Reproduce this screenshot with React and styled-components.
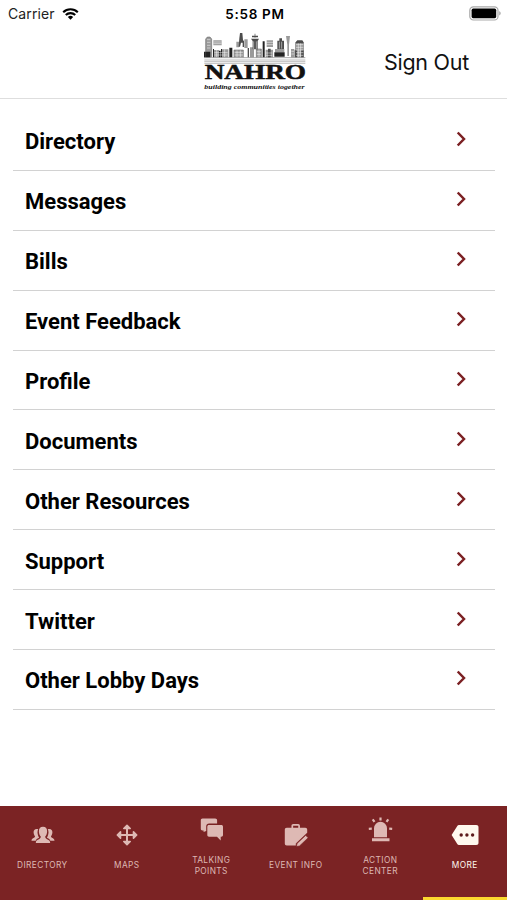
import styled, { createGlobalStyle } from 'styled-components';

const GlobalStyle = createGlobalStyle`
  * {
    box-sizing: border-box;
  }
  body {
    margin: 0;
    background: #fff;
  }
`;

const menu = [
  'Directory',
  'Messages',
  'Bills',
  'Event Feedback',
  'Profile',
  'Documents',
  'Other Resources',
  'Support',
  'Twitter',
  'Other Lobby Days',
];

const WifiIcon = () => (
  <svg width="17" height="12" viewBox="0 0 18 13">
    <g fill="none" stroke="#000" strokeWidth="2.300">
      <path d="M1.100 4.600a11.200 11.200 0 0 1 15.800 0" />
      <path d="M3.900 7.700a7.200 7.200 0 0 1 10.200 0" />
    </g>
    <path d="M9 12.700 6.100 9.800a4.100 4.100 0 0 1 5.800 0z" />
  </svg>
);

const BatteryIcon = () => (
  <svg width="33" height="15" viewBox="0 0 33 15">
    <rect x=".8" y=".8" width="28.200" height="13.200" rx="3.600" fill="#fff" stroke="#a9a9a9" strokeWidth="1.200" />
    <rect x="2.600" y="2.600" width="24.600" height="9.600" rx="1.600" />
    <path d="M30.200 5.300c2 .7 2 3.500 0 4.200z" fill="#a9a9a9" />
  </svg>
);

const Logo = () => (
  <svg width="104" height="62" viewBox="24 93 312 186">
    <g fill="#9a9a9a">
      <path d="M32 172v-55l5-6h8l5 6v55z" />
      <path d="M55 121h25v15H55zM56 150h16v22H56zM80 148h20v24H80z" />
      <path d="M117 150h28v22h-28zM124 125h8v17h-8zM148 118h10v26h-10z" />
      <path d="M165 142h12v30h-12zM184 147h15v25h-15z" />
      <path d="M215 121h19v20h-19zM212 149h22v23h-22zM240 147h28v10h-28z" />
      <path d="M273 108h12l-3 26v34h-5v-34zM288 147h10v25h-10zM300 126h27v46h-27z" />
    </g>
    <g fill="#222">
      <path d="M27 155h19v17H27zM54 147h3v25h-3zM78 147h3v25h-3zM103 143h9v29h-9z" />
      <path d="M72 152h5v20h-5zM203 124h6v48h-6zM238 157h31v13h-31z" />
    </g>
    <g fill="#4c4c4c">
      <path d="m131 140 2-25 2-16h7l2 21 3 4v17h-4v-13h-5l-3 12z" />
      <path d="M168 116h24l-4 7v25h-15v-25zM171 107h18v5h-18zM179 101h2v12h-2z" />
      <path d="M247 122h20v25h-20zM253 115h8v7h-8zM303 125l4-4h15l3 4v5h-22zM299 151h7v21h-7zM318 151h8v21h-8zM158 144h4v28h-4zM219 146h8v26h-8z" />
    </g>
    <g stroke="#fff" strokeWidth="1.500">
      <path d="M36 119h10M36 127h10M36 136h10M36 144h10M55 126h25M55 131h25M58 158h40M58 165h40M118 157h26M118 165h26" />
      <path d="M185 155h13M185 163h13M214 127h20M214 134h20M212 159h20M212 166h20M289 154h8M289 162h8M303 134h22M303 142h22M303 150h22M303 158h22M303 166h22" />
      <path d="M65 150v22M89 148v24M126 150v22M136 150v22M192 147v25M176 124v24M184 124v24M253 125v21M260 125v21M310 130v42M317 130v42" />
    </g>
    <g stroke="#555" strokeWidth="1.500" fill="none">
      <path d="M32 171v-54l5-6h8l5 6v54M117 172v-22h28v22M184 172v-25h15v25M27 173h304" />
    </g>
    <path d="M28 180h303M28 185h303M28 190h303" stroke="#a5a5a5" strokeWidth="2.200" />
    <text
      x="29"
      y="238"
      textLength="304"
      lengthAdjust="spacingAndGlyphs"
      fontFamily="'Liberation Serif', serif"
      fontWeight="700"
      fontSize="60"
      stroke="#111"
      strokeWidth="1.500"
      fill="#111"
    >
      NAHRO
    </text>
    <text
      x="28"
      y="266"
      textLength="301"
      lengthAdjust="spacingAndGlyphs"
      fontFamily="'Liberation Serif', serif"
      fontWeight="700"
      fontStyle="italic"
      fontSize="21"
      fill="#111"
    >
      building communities together
    </text>
  </svg>
);

const ChevronIcon = () => (
  <svg width="12" height="18" viewBox="0 0 12 18">
    <path d="m1.700 2.500 6.300 6.500-6.300 6.500" fill="none" stroke="#7b2023" strokeWidth="2.500" />
  </svg>
);

const PeopleIcon = () => (
  <svg width="24" height="18" viewBox="0 0 24 18" fill="currentColor">
    <path d="M7.200 3.200C4.300 2.400 2.500 3.800 2.600 6.400c.1 2 .9 3 1.400 3.800.4 1.900-3.500 1.300-3.500 4.500h4.200c.6-1.600 2-2.300 3.400-2.900C7.200 10.300 6.600 8.300 6.500 6.500c0-1.300.2-2.400.7-3.300z" />
    <path d="M16.800 3.200c2.900-.8 4.700.6 4.600 3.200-.1 2-.9 3-1.400 3.800-.4 1.900 3.500 1.300 3.500 4.500h-4.200c-.6-1.600-2-2.300-3.400-2.900.9-1.500 1.500-3.500 1.600-5.300 0-1.300-.2-2.400-.7-3.300z" />
    <path d="M12 .8c-2.800 0-4.300 1.900-4.100 4.900.1 2.300 1 3.800 1.900 4.900.3 3.500-5 2.100-5 6.400h14.400c0-4.300-5.300-2.900-5-6.400.9-1.100 1.800-2.600 1.900-4.900.2-3-1.300-4.900-4.100-4.900z" />
  </svg>
);

const MoveIcon = () => (
  <svg width="22" height="22" viewBox="0 0 22 22" fill="none" stroke="currentColor">
    <path d="M11 3v16M3 11h16" strokeWidth="2" />
    <path d="m7.800 4.500 3.200-3.200 3.200 3.200zM7.800 17.500l3.200 3.200 3.200-3.200zM4.500 7.800 1.300 11l3.200 3.200zM17.500 7.800l3.200 3.200-3.200 3.200z" fill="currentColor" strokeWidth="1.600" strokeLinejoin="round" />
  </svg>
);

const ChatIcon = () => (
  <svg width="24" height="23" viewBox="0 0 24 23" fill="currentColor">
    <path d="M2.500.5h12.700c1.100 0 1.900.8 1.900 1.800v3.300H9.200c-1.900 0-3 1.100-3 3V13l-2.600 1V12.400H2.500C1.400 12.400.8 11.800.8 10.700V2.300C.8 1.200 1.400.5 2.500.5z" />
    <path d="M9 7h12.300c1 0 1.700.7 1.700 1.700v8.400c0 1-.7 1.700-1.700 1.700h-.6v3.700L17 18.800H9c-1 0-1.700-.7-1.700-1.700V8.700C7.300 7.700 8 7 9 7z" />
  </svg>
);

const BriefcaseIcon = () => (
  <svg width="25" height="24" viewBox="0 0 25 24" fill="currentColor">
    <path d="M8.300 5V2.700c0-.6.300-.9.900-.9h5c.6 0 .9.300.9.900V5" fill="none" stroke="currentColor" strokeWidth="1.700" />
    <path d="M2.800 4.800h18.400c1.300 0 2 .7 2 2v3L11.800 20.500v2H2.800c-1.300 0-2-.7-2-2V6.800c0-1.300.7-2 2-2z" />
    <path d="m13 20.500 8.700-8.200 2.500 2.500-8.700 8.200-3.100.6z" stroke="#7b2324" strokeWidth=".7" />
  </svg>
);

const SirenIcon = () => (
  <svg width="25" height="25" viewBox="0 0 25 25" fill="currentColor">
    <path d="M6 20.300v-9a6.500 6.500 0 0 1 13 0v9zM4 21.300h17.500v3H4z" />
    <g stroke="currentColor" strokeWidth="2.200">
      <path d="M12.500.5v3M4.700 2.400l1.800 2.500M20.300 2.400l-1.800 2.500M.8 11.800l3-.2M24.200 11.800l-3-.2" />
    </g>
  </svg>
);

const MoreIcon = () => (
  <svg width="28" height="22" viewBox="0 0 28 22">
    <path d="M8.300 1h16.900c1.500 0 2.300.8 2.300 2.200v15.600c0 1.400-.8 2.200-2.300 2.200H8.300c-.9 0-1.500-.3-2-1.100L.6 11l5.700-8.900c.5-.8 1.100-1.100 2-1.100z" fill="currentColor" />
    <g fill="#5d1a1b">
      <circle cx="10.200" cy="11" r="1.700" />
      <circle cx="15.900" cy="11" r="1.700" />
      <circle cx="21.600" cy="11" r="1.700" />
    </g>
  </svg>
);

const tabs = [
  { label: 'DIRECTORY', icon: <PeopleIcon /> },
  { label: 'MAPS', icon: <MoveIcon /> },
  { label: 'TALKING POINTS', icon: <ChatIcon />, tall: true },
  { label: 'EVENT INFO', icon: <BriefcaseIcon /> },
  { label: 'ACTION CENTER', icon: <SirenIcon />, tall: true },
  { label: 'MORE', icon: <MoreIcon />, active: true },
];

const App = () => (
  <Screen>
    <GlobalStyle />
    <StatusBar>
      <Carrier>
        <span>Carrier</span>
        <WifiIcon />
      </Carrier>
      <Clock>5:58 PM</Clock>
      <Battery>
        <BatteryIcon />
      </Battery>
    </StatusBar>
    <Header>
      <Brand>
        <Logo />
      </Brand>
      <SignOut type="button">Sign Out</SignOut>
    </Header>
    <Menu>
      {menu.map(item => (
        <MenuItem key={item}>
          <MenuLabel>{item}</MenuLabel>
          <ChevronIcon />
        </MenuItem>
      ))}
    </Menu>
    <TabBar>
      {tabs.map(({ label, icon, tall, active }) => (
        <Tab key={label} $active={active}>
          <TabIcon $tall={tall}>{icon}</TabIcon>
          <TabLabel $tall={tall}>{label}</TabLabel>
        </Tab>
      ))}
    </TabBar>
  </Screen>
);

export default App;

const Screen = styled.div`
  display: flex;
  flex-direction: column;
  width: 507px;
  height: 900px;
  overflow: hidden;
  background: #fff;
  color: #000;
  font-family: Inter, sans-serif;
`;

const StatusBar = styled.div`
  display: grid;
  grid-template-columns: 1fr auto 1fr;
  align-items: center;
  height: 27px;
  padding: 0 5px 0 8px;
`;

const Carrier = styled.div`
  display: flex;
  align-items: center;
  gap: 7px;
  font-size: 14px;
  letter-spacing: 0.1px;
  color: #222;
`;

const Clock = styled.div`
  font-size: 13.5px;
  font-weight: 600;
  letter-spacing: 0.7px;
`;

const Battery = styled.div`
  display: flex;
  justify-content: flex-end;
`;

const Header = styled.header`
  display: grid;
  grid-template-columns: 203px 104px 1fr;
  height: 72px;
  border-bottom: 1px solid #dedede;
`;

const Brand = styled.div`
  grid-column: 2;
  padding-top: 4px;

  svg {
    display: block;
  }
`;

const SignOut = styled.button`
  justify-self: end;
  align-self: start;
  margin: 21px 38px 0 0;
  padding: 0;
  border: none;
  background: none;
  font-family: inherit;
  font-size: 21.5px;
  line-height: 28px;
  letter-spacing: -0.25px;
  color: #111;
`;

const Menu = styled.ul`
  flex: 1;
  margin: 0;
  padding: 12px 12px 0 13px;
  list-style: none;
`;

const MenuItem = styled.li`
  display: flex;
  align-items: center;
  justify-content: space-between;
  height: 59.9px;
  padding: 0 27px 2px 12px;
  border-bottom: 1px solid #d2d2d2;
`;

const MenuLabel = styled.span`
  padding-top: 6px;
  font-family: Roboto, sans-serif;
  font-size: 22px;
  font-weight: 700;
  line-height: 28px;
`;

const TabBar = styled.nav`
  display: grid;
  grid-template-columns: repeat(6, 1fr);
  height: 94px;
  background: #7b2324;
`;

const Tab = styled.div`
  display: flex;
  flex-direction: column;
  align-items: center;
  color: ${({ $active }) => ($active ? '#fff8ee' : '#deb9b4')};
  border-bottom: 3px solid ${({ $active }) => ($active ? '#fbd92f' : 'transparent')};
`;

const TabIcon = styled.div`
  display: flex;
  align-items: center;
  justify-content: center;
  height: 26px;
  margin-top: ${({ $tall }) => ($tall ? '10px' : '16px')};
  padding-left: 1px;
`;

const TabLabel = styled.span`
  width: 60px;
  margin-top: ${({ $tall }) => ($tall ? '12.5px' : '12px')};
  font-size: 8.3px;
  line-height: 11px;
  letter-spacing: 0.4px;
  text-align: center;
`;
